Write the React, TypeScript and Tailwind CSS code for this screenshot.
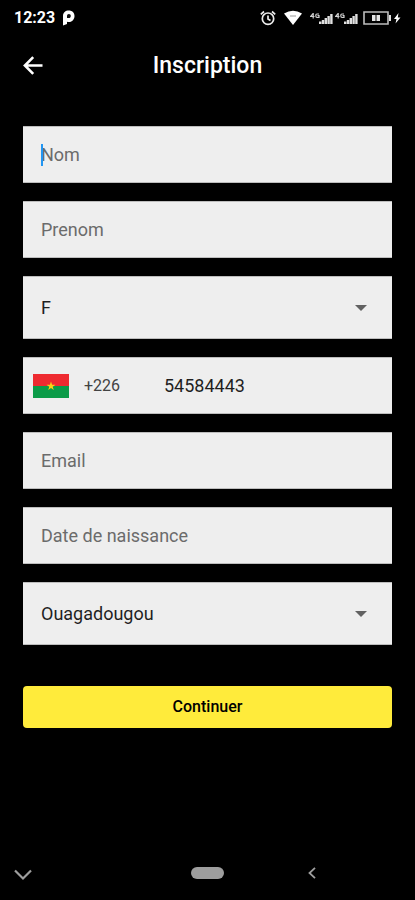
import type { ReactNode } from "react";

const fieldBox = "border-y border-[#bdbdbd] bg-[#eeeeee] text-lg text-[#1f1f1f]";

function TextField({ label, type = "text", caret = false }: { label: string; type?: string; caret?: boolean }) {
  return (
    <div className="relative">
      <input
        type={type}
        aria-label={label}
        placeholder={label}
        className={`block h-[57px] w-full rounded-none px-[18px] outline-none placeholder:text-[#6b6b6b] ${fieldBox}`}
      />
      {caret && <span className="absolute top-[18px] left-[18px] h-[22px] w-[2px] bg-[#2196f3]" />}
    </div>
  );
}

function SelectField({ label, options }: { label: string; options: string[] }) {
  return (
    <div className="relative">
      <select
        aria-label={label}
        defaultValue={options[0]}
        className={`block h-[63px] w-full appearance-none rounded-none pr-12 pl-[18px] outline-none ${fieldBox}`}
      >
        {options.map((option) => (
          <option key={option}>{option}</option>
        ))}
      </select>
      <svg viewBox="0 0 12 6" className="pointer-events-none absolute top-[29px] right-[25px] h-[6px] w-[12px]" fill="#616161">
        <path d="M0 0h12L6 6z" />
      </svg>
    </div>
  );
}

function Signal() {
  return (
    <svg viewBox="0 0 23 12" className="h-3 w-[23px]" fill="none" stroke="#d0d0d0">
      <path d="M3.200 1v5.500M4.500 4.500H.5L3.200 1.300" strokeWidth="1.200" />
      <path d="M9 2H7Q5.800 2 5.800 3.700T7 5.500h2V3.700H7.500" strokeWidth="1.200" />
      <path
        d="M9 9.500h2.400V12H9zM11.800 8h2.400v4h-2.400zM14.600 6H17v6h-2.400zM17.400 4h2.400v8h-2.400zM20.200 2h2.400v10h-2.400z"
        fill="#e0e0e0"
        stroke="none"
      />
    </svg>
  );
}

function StatusBar() {
  return (
    <div className="flex h-[34px] items-center justify-between px-[14px] pt-px text-white">
      <div className="flex items-center gap-[7px]">
        <span className="text-base font-bold">12:23</span>
        <svg viewBox="0 0 13 16" className="h-4 w-[13px]">
          <path
            d="M1 15.500V6C1 2.500 3.500.5 6.800.5S12.500 2.700 12.500 6s-2.300 6-5.500 6c-.8 0-1.500 0-2-.3v2.300z"
            fill="#fff"
          />
          <path d="M5 8V6.200C5 4.800 5.700 4 6.900 4s1.900.8 1.900 2-.8 2.100-2 2.100z" fill="#111" />
        </svg>
      </div>
      <div className="flex items-center">
        <svg viewBox="0 0 16 16" className="mr-2 h-4 w-4" fill="none" stroke="#ededed" strokeWidth="1.700">
          <circle cx="8" cy="8.700" r="5.700" />
          <path d="M.8 4.300L4 1.500M15.200 4.300L12 1.500M8 5.500v3.600l2.500 1.400" />
        </svg>
        <svg viewBox="0 0 18 15" className="mr-2 h-[15px] w-[18px]" fill="#fff">
          <path d="M0 3.500Q9-2 18 3.500L9 15z" />
          <path d="M6 5.500h6v1H6z" fill="#999" />
        </svg>
        <Signal />
        <span className="w-[2px]" />
        <Signal />
        <svg viewBox="0 0 28 14" className="ml-[5px] h-[14px] w-7">
          <path d="M1 1h24v12H1z" fill="none" stroke="#bdbdbd" strokeWidth="1.600" />
          <path d="M26 4h2v6h-2z" fill="#e0e0e0" />
          <path d="M9 4h3.500v6H9zM13.500 4H17v6h-3.500z" fill="#e6e6e6" />
        </svg>
        <svg viewBox="0 0 8 12" className="ml-[2px] h-3 w-2" fill="#fff">
          <path d="M5.500 1L1 7h2.500L2.500 11.500 7.500 5.500H4.800z" />
        </svg>
      </div>
    </div>
  );
}

function IconButton({ label, className, children }: { label: string; className?: string; children?: ReactNode }) {
  return (
    <button type="button" aria-label={label} className={className}>
      {children}
    </button>
  );
}

function Flag() {
  return (
    <svg viewBox="0 0 36 24" className="h-6 w-9" role="img" aria-label="Burkina Faso">
      <path d="M0 0h36v12H0z" fill="#ee2a30" />
      <path d="M0 12h36v12H0z" fill="#0b9b48" />
      <path
        d="M18 7.500l1.100 3.300h3.400l-2.800 2 1.100 3.300-2.800-2-2.800 2 1.100-3.300-2.800-2h3.400z"
        fill="#fcd116"
      />
    </svg>
  );
}

export default function App() {
  return (
    <div className="flex min-h-screen flex-col bg-black font-['Roboto',sans-serif]">
      <StatusBar />
      <header className="grid h-16 grid-cols-[1fr_auto_1fr] items-center px-[23px] text-white">
        <IconButton label="Retour" className="justify-self-start">
          <svg viewBox="0 0 20 20" className="h-5 w-5" fill="none" stroke="#fff" strokeWidth="2.600">
            <path d="M19.500 9.500H2M10.200 1.200L1.900 9.500l8.300 8.300" />
          </svg>
        </IconButton>
        <h1 className="text-[23px] font-medium">Inscription</h1>
      </header>

      <form className="flex flex-col gap-[18px] px-[23px] pt-7">
        <TextField label="Nom" caret />
        <TextField label="Prenom" />
        <SelectField label="Sexe" options={["F", "M"]} />
        <div className={`flex h-[57px] items-center pl-[10px] ${fieldBox}`}>
          <Flag />
          <label htmlFor="phone" className="ml-[15px] w-20 text-base text-[#424242]">
            +226
          </label>
          <input
            id="phone"
            type="tel"
            defaultValue="54584443"
            className="min-w-0 flex-1 bg-transparent outline-none"
          />
        </div>
        <TextField label="Email" type="email" />
        <TextField label="Date de naissance" />
        <SelectField label="Ville" options={["Ouagadougou", "Bobo-Dioulasso"]} />
        <button type="submit" className="mt-[23px] h-[42px] rounded bg-[#ffeb3b] text-base font-medium text-black">
          Continuer
        </button>
      </form>

      <nav className="mt-auto grid h-[54px] grid-cols-[1fr_auto_1fr] items-center">
        <IconButton label="Masquer" className="justify-self-start pt-1 pl-[14px]">
          <svg viewBox="0 0 18 12" className="h-3 w-[18px]" fill="none" stroke="#9e9e9e" strokeWidth="2.200">
            <path d="M1 1.500l8 8 8-8" />
          </svg>
        </IconButton>
        <IconButton label="Accueil" className="h-3 w-[33px] rounded-full bg-[#9e9e9e]" />
        <IconButton label="Précédent" className="justify-self-center pr-4">
          <svg viewBox="0 0 8 12" className="h-3 w-2" fill="none" stroke="#9e9e9e" strokeWidth="1.800">
            <path d="M7 .8L1.500 6 7 11.200" />
          </svg>
        </IconButton>
      </nav>
    </div>
  );
}
